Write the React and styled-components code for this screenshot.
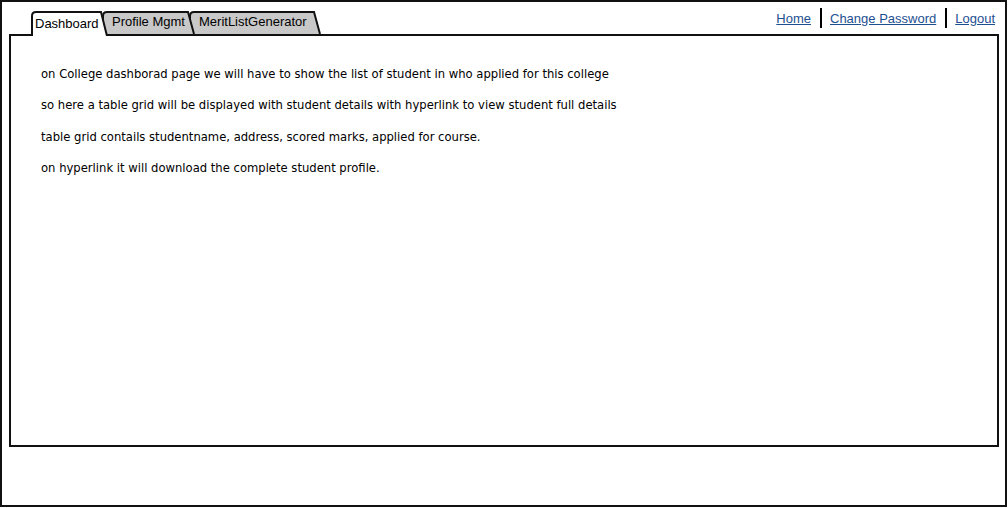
import React from 'react';
import styled, { createGlobalStyle } from 'styled-components';

const GlobalStyle = createGlobalStyle`
  html, body {
    margin: 0;
    padding: 0;
    background: #fff;
  }
  body {
    font-family: "Liberation Sans", Arial, sans-serif;
    color: #000;
  }
`;

// outer browser-ish frame
const Frame = styled.div`
  width: 1007px;
  height: 507px;
  box-sizing: border-box;
  border: 2px solid #111;
  display: flex;
  flex-direction: column;
`;

const Header = styled.div`
  display: flex;
  justify-content: space-between;
  align-items: flex-start;
  padding: 0 10px 0 29px;
`;

const TabRow = styled.div`
  display: flex;
  align-items: flex-end;
  margin-top: 9px;
  margin-bottom: -2px;
  position: relative;
  z-index: 1;
`;

const Tab = styled.div`
  position: relative;
  width: ${(p) => p.$w}px;
  height: 25px;
  margin-left: ${(p) => (p.$first ? 0 : -6)}px;
  z-index: ${(p) => p.$z};
  font-size: 13px;
  box-sizing: border-box;
  padding: ${(p) => (p.$active ? '5px 0 0 4px' : '3px 0 0 10px')};
  white-space: nowrap;

  svg {
    position: absolute;
    left: 0;
    top: 0;
    z-index: -1;
  }
`;

const Links = styled.div`
  display: flex;
  align-items: center;
  margin-top: 6px;
`;

const Link = styled.a`
  color: #1d4f91;
  text-decoration: underline;
  font-size: 13px;
  padding: 0 9px 0 8px;
  &:first-child {
    padding-left: 0;
  }
  &:last-child {
    padding-right: 0;
  }
`;

const Sep = styled.span`
  width: 2px;
  height: 20px;
  background: #000;
`;

const Panel = styled.div`
  margin: 0 6px 0 7px;
  height: 413px;
  box-sizing: border-box;
  border: 2px solid #111;
  padding: 30px 0 0 30px;
  background: #fff;
`;

const Line = styled.p`
  margin: 0 0 15.4px;
  font-family: "DejaVu Sans", Verdana, sans-serif;
  font-size: 11.6px;
  line-height: 16px;
`;

const TabShape = ({ w, active }) => {
  const h = active ? 25 : 23;
  const d = `M1,${h} L1,5 Q1,1 5,1 L${w - 7},1 L${w - 1},${h}`;
  return (
    <svg width={w} height={25}>
      <path d={d} fill={active ? '#fff' : '#c8c8c8'} stroke="#111" strokeWidth="2" />
    </svg>
  );
};

const tabs = [
  { label: 'Dashboard', w: 77, active: true },
  { label: 'Profile Mgmt', w: 93 },
  { label: 'MeritListGenerator', w: 132 },
];

const lines = [
  'on College dashborad page we will have to show the list of student in who applied for this college',
  'so here a table grid will be displayed with student details with hyperlink to view student full details',
  'table grid contails studentname, address, scored marks, applied for course.',
  'on hyperlink it will download the complete student profile.',
];

const App = () => (
  <>
    <GlobalStyle />
    <Frame>
      <Header>
        <TabRow>
          {tabs.map((t, i) => (
            <Tab key={t.label} $w={t.w} $active={t.active} $first={i === 0} $z={tabs.length - i}>
              <TabShape w={t.w} active={t.active} />
              {t.label}
            </Tab>
          ))}
        </TabRow>
        <Links>
          <Link href="#">Home</Link>
          <Sep />
          <Link href="#">Change Password</Link>
          <Sep />
          <Link href="#">Logout</Link>
        </Links>
      </Header>
      <Panel>
        {lines.map((l) => (
          <Line key={l}>{l}</Line>
        ))}
      </Panel>
    </Frame>
  </>
);

export default App;
